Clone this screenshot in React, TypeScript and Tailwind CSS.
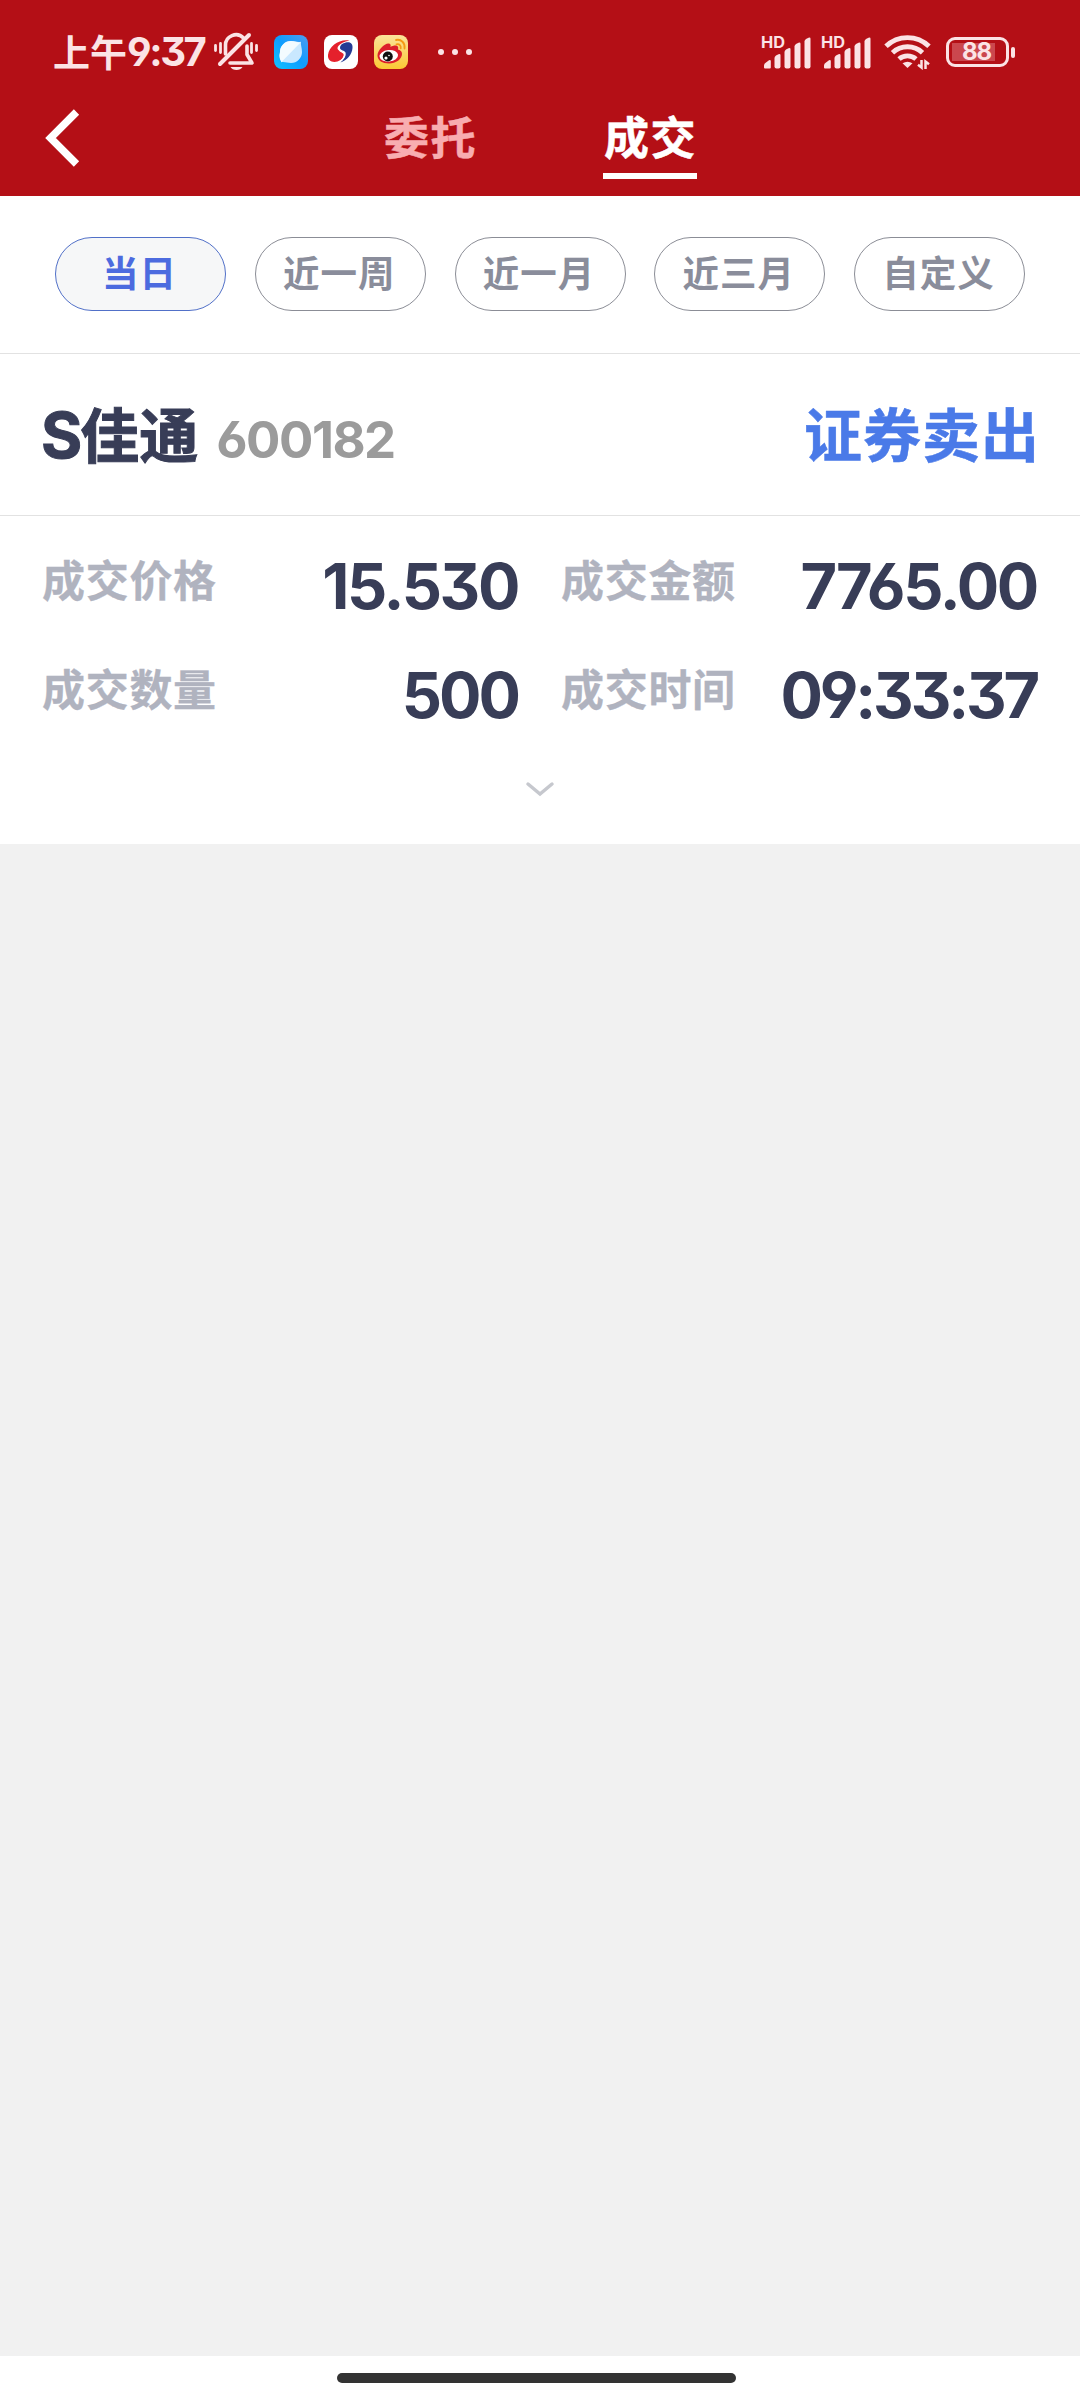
import { useState } from 'react'
import clsx from 'clsx'

const ranges = ['当日', '近一周', '近一月', '近三月', '自定义']

const deal = {
  name: 'S佳通',
  code: '600182',
  action: '证券卖出',
  fields: [
    { label: '成交价格', value: '15.530', className: 'tracking-[-2.400px]' },
    { label: '成交金额', value: '7765.00', className: 'tracking-[-2.300px]' },
    { label: '成交数量', value: '500', className: 'tracking-[-3px]' },
    { label: '成交时间', value: '09:33:37', className: 'tracking-[-3.200px]' },
  ],
}

function MutedBell() {
  return (
    <svg width="44" height="40" viewBox="0 0 44 40" fill="none" stroke="#fbe3e5" strokeLinecap="round" strokeLinejoin="round">
      <path d="M11.5 22V13.5a10.5 10.5 0 0 1 18-7.5" strokeWidth="3.6" />
      <path d="M6 32 35 3" strokeWidth="4" />
      <path d="M33 14v8.500l5 8.500H16" strokeWidth="3.6" />
      <path d="M16.500 35h12c-2 4-10 4-12 0z" fill="#fbe3e5" stroke="none" />
      <path d="M1.500 13.500v5M6.500 11.500v9M37.500 11.500v9M42.500 13.500v5" strokeWidth="2.800" />
    </svg>
  )
}

function BrowserLogo() {
  return (
    <svg width="34" height="34" viewBox="0 0 34 34">
      <defs>
        <linearGradient id="browser" x1="0" y1="1" x2="1" y2="0">
          <stop offset="0" stopColor="#12c3ff" />
          <stop offset=".5" stopColor="#0d9dff" />
          <stop offset="1" stopColor="#4f9cf0" />
        </linearGradient>
      </defs>
      <rect width="34" height="34" rx="8" fill="url(#browser)" />
      <path d="M17 6c4 0 6 1.500 10 .8C26.500 10 28 13 28 17a11 11 0 0 1-11 11c-4 0-6-1.500-10-.8C7.500 24 6 21 6 17A11 11 0 0 1 17 6z" fill="#c9e8ff" />
      <path d="M26.500 7.500 7.500 27A11 11 0 0 1 6 17 11 11 0 0 1 17 6c4 0 6 1.500 9.500 1.500z" fill="#f3fbff" />
    </svg>
  )
}

function BrokerLogo() {
  return (
    <svg width="34" height="34" viewBox="0 0 34 34">
      <rect width="34" height="34" rx="8" fill="#fff" />
      <path d="M25.500 5.500C16 3.500 5 10.500 4 20c-.5 6 4.500 8 9.500 6.500 4.500-1.500 6.500-5 6.500-7.500 0-2.500-3-2.500-5-3.500-3.500-2-1-7.500 10.500-10z" fill="#e5212c" />
      <path d="M19 8.500c7-3 10 0 9.500 4.500-.5 6.500-5.500 12.500-12 14.500 3.500-3 6-7 5-10-1-2.500-5-1.500-5.500-4.500 0-2 1-3.500 3-4.500z" fill="#263b94" />
      <path d="M15.500 15c1 2.500 5.500 1.500 5 5.500-.3 2-1.500 3.500-3 5" fill="none" stroke="#fff" strokeWidth="1.300" />
    </svg>
  )
}

function WeiboLogo() {
  return (
    <svg width="34" height="34" viewBox="0 0 34 34">
      <defs>
        <linearGradient id="weibo" x1="0" y1="0" x2="0" y2="1">
          <stop offset="0" stopColor="#fbe39a" />
          <stop offset="1" stopColor="#fbc935" />
        </linearGradient>
      </defs>
      <rect width="34" height="34" rx="8" fill="url(#weibo)" />
      <path d="M3.500 20.500c0-5 6.500-12 11-12 2 0 2.500 1.500 2 3.500 3.500-2 9-2.500 7.500 2.500 3 .8 4 2.500 4 4.500 0 5-6 9.500-13 9.500-6.500 0-11.500-3-11.500-8z" fill="#dc1f2b" />
      <ellipse cx="14.800" cy="20.800" rx="9.300" ry="5.800" fill="#fff" transform="rotate(-6 14.800 20.800)" />
      <circle cx="13.800" cy="21.500" r="5" fill="#111" />
      <circle cx="12" cy="23" r="1.600" fill="#fff" />
      <circle cx="15" cy="20.500" r=".8" fill="#fff" />
      <path d="M22 5c5-1.200 9.500 3 8.500 8.500M22.500 9.300c3-.6 4.600 1.200 4.200 4" fill="none" stroke="#f59a14" strokeWidth="1.800" strokeLinecap="round" />
    </svg>
  )
}

function Signal() {
  return (
    <svg width="52" height="46" viewBox="0 -6 52 46" fill="#fbe3e5">
      <text x="0" y="12.500" fontSize="16" fontWeight="700" textLength="24" lengthAdjust="spacingAndGlyphs" fontFamily="Inter, sans-serif">HD</text>
      <path d="M3 32.500v-2q0-2 2-3l3-2.300q1.800-.8 1.800 1v6.300q0 1-1 1H4q-1 0-1-1z" />
      <path d="M13.500 23q0-1.500 1.500-2.500l2.500-1.300q2-.8 2 1v11.300q0 2-2 2h-2q-2 0-2-2z" />
      <path d="M23.500 17q0-1.500 1.500-2.500l2.500-1.300q2-.8 2 1v17.300q0 2-2 2h-2q-2 0-2-2z" />
      <path d="M33.500 11.500q0-1.500 1.500-2.500l2.500-1.300q2-.8 2 1v22.800q0 2-2 2h-2q-2 0-2-2z" />
      <path d="M43.500 6.500q0-1.500 1.500-2.500l2.500-1.300q2-.8 2 1v27.800q0 2-2 2h-2q-2 0-2-2z" />
    </svg>
  )
}

function Wifi() {
  return (
    <svg width="48" height="36" viewBox="0 0 48 36" fill="none" stroke="#fbe3e5" strokeWidth="4.900">
      <path d="M2 12.300a31 31 0 0 1 43 0" />
      <path d="M8.500 18.700a22 22 0 0 1 30 0" />
      <path d="M15 25a13 13 0 0 1 17 0" />
      <path d="M18.500 29.300q5-3.300 10 0L23.500 34z" fill="#fbe3e5" stroke="none" />
      <path d="M37.500 26v7.500l-3.500-2.800M41.500 35v-7.500l3.500 2.800" strokeWidth="2.500" />
    </svg>
  )
}

function StatusBar() {
  return (
    <div className="flex h-[104px] items-center pl-[53px] pr-[65px] text-[#fbe3e5]">
      <div className="flex h-[42px] w-[161px] items-center whitespace-nowrap">
        <span className="pb-0.5 font-['Noto_Sans_CJK_SC',sans-serif] text-[37px] font-bold leading-none">上午</span>
        <span className="font-['Inter',sans-serif] text-[40px] font-bold leading-none tracking-[-2.400px] [font-feature-settings:'ss01','cv09']">9:37</span>
      </div>
      <MutedBell />
      <div className="ml-4 flex gap-4">
        <BrowserLogo />
        <BrokerLogo />
        <WeiboLogo />
      </div>
      <div className="ml-[30px] flex gap-2">
        <i className="size-1.5 rounded-full bg-[#fbe3e5]" />
        <i className="size-1.5 rounded-full bg-[#fbe3e5]" />
        <i className="size-1.5 rounded-full bg-[#fbe3e5]" />
      </div>
      <div className="ml-auto flex items-center">
        <div className="mr-[11px] flex gap-2">
          <Signal />
          <Signal />
        </div>
        <Wifi />
        <div className="ml-[14px] flex h-[30px] w-[63px] rounded-[9px] border-[3px] border-[#fbe3e5] p-[3px]">
          <div className="flex h-[18px] w-[51px] items-center justify-center bg-linear-to-r from-[#cb474e] from-[85%] to-transparent to-[85%] pr-0.5 font-['Inter',sans-serif] text-[24px] font-bold leading-none tracking-[-1px]">
            88
          </div>
        </div>
        <i className="ml-0.5 h-[11px] w-1 rounded-full bg-[#fbe3e5]" />
      </div>
    </div>
  )
}

export default function App() {
  const [range, setRange] = useState('当日')

  return (
    <div className="flex h-[2400px] w-[1080px] flex-col bg-[#f1f1f1] font-['Noto_Sans_CJK_SC',sans-serif] font-bold">
      <header className="h-[196px] bg-[#b40f16]">
        <StatusBar />
        <nav className="flex h-[92px] items-start">
          <svg className="ml-11 mt-1" width="38" height="60" viewBox="0 0 38 60" fill="none" stroke="#fff" strokeWidth="7.500">
            <path d="M32.500 4 6.500 30l26 26" />
          </svg>
          <div className="ml-[301px] h-[75px] w-[94px] pl-px pt-2 text-center text-[45px] leading-[48px] tracking-[1.500px] text-[#f8adb0] [-webkit-text-stroke:0.5px]">委托</div>
          <div className="ml-[126px] h-[75px] w-[94px] border-b-[6px] border-white pl-px pt-2 text-center text-[45px] leading-[48px] tracking-[1.500px] text-white [-webkit-text-stroke:0.5px]">成交</div>
        </nav>
      </header>

      <div className="flex h-[158px] justify-between border-b border-[#e2e2e2] bg-white px-[55px] pt-[41px]">
        {ranges.map(r => (
          <button
            key={r}
            onClick={() => setRange(r)}
            className={clsx(
              'flex h-[74px] w-[171px] items-center justify-center rounded-full border pb-[3px] pr-0.5 text-[36.500px] font-bold leading-none tracking-[1px]',
              range === r ? 'border-[#5170c8] bg-[#f6f7f8] text-[#4c6bdf]' : 'border-[#8b8d96] text-[#8a8d9b]'
            )}
          >
            {r}
          </button>
        ))}
      </div>

      <section className="h-[490px] bg-white">
        <div className="flex h-[162px] items-center justify-between border-b border-[#e2e2e2] pl-[41px] pr-10">
          <div className="flex items-baseline pt-1.5 leading-[80px]">
            <span className="font-['Inter','Noto_Sans_CJK_SC',sans-serif] text-[59px] text-[#383d57] [-webkit-text-stroke:1px]">
              <span className="mr-[-2px] text-[63px]">S</span>
              {deal.name.slice(1)}
            </span>
            <span className="ml-[18px] font-['Inter',sans-serif] text-[51px] tracking-[-1.500px] text-[#9b9b9b] [font-feature-settings:'ss01','cv09']">{deal.code}</span>
          </div>
          <span className="pb-[5px] text-[58px] leading-[80px] tracking-[1px] text-[#4a7ae8] [-webkit-text-stroke:0.5px]">{deal.action}</span>
        </div>

        <div className="grid grid-cols-2 gap-x-[41px] pl-[42px] pr-[41px] pt-[11px]">
          {deal.fields.map(f => (
            <div key={f.label} className="flex h-[109px] items-center justify-between">
              <span className="pb-[7px] text-[43px] leading-none tracking-[0.7px] text-[#b0b3bf] [-webkit-text-stroke:0.3px]">{f.label}</span>
              <span
                className={clsx(
                  "pr-0.5 pt-2.5 font-['Inter',sans-serif] text-[63px] leading-none text-[#383d57] [font-feature-settings:'ss01','cv09']",
                  f.className
                )}
              >
                {f.value}
              </span>
            </div>
          ))}
        </div>

        <svg className="mx-auto mt-[35px]" width="30" height="18" viewBox="0 0 30 18" fill="none" stroke="#c6c8ce" strokeWidth="3.500" strokeLinecap="round">
          <path d="m3 4 12 10L27 4" />
        </svg>
      </section>

      <footer className="mt-auto h-11 bg-white pt-[17px]">
        <div className="ml-[337px] h-2.5 w-[399px] rounded-full bg-[#333]" />
      </footer>
    </div>
  )
}
